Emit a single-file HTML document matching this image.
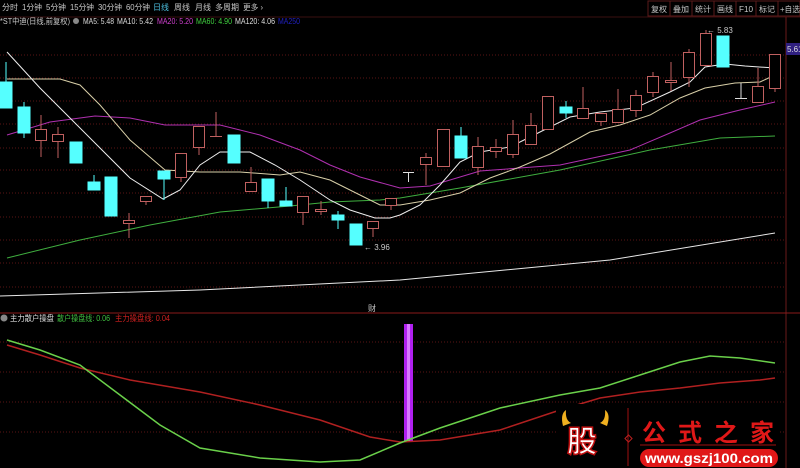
<!DOCTYPE html>
<html><head><meta charset="utf-8"><style>
body{margin:0;background:#000;width:800px;height:468px;overflow:hidden;font-family:"Liberation Sans","Noto Sans CJK SC",sans-serif;}
svg{display:block}
</style></head><body>
<svg width="800" height="468" viewBox="0 0 800 468" xmlns="http://www.w3.org/2000/svg" font-family="Liberation Sans, Noto Sans CJK SC, sans-serif">
<rect width="800" height="468" fill="#000"/>
<!-- toolbar -->
<g font-size="8" fill="#c8c8c8" lengthAdjust="spacingAndGlyphs">
<text x="2" y="10" textLength="16" lengthAdjust="spacingAndGlyphs">分时</text>
<text x="22" y="10" textLength="20" lengthAdjust="spacingAndGlyphs">1分钟</text>
<text x="46" y="10" textLength="20" lengthAdjust="spacingAndGlyphs">5分钟</text>
<text x="70" y="10" textLength="24" lengthAdjust="spacingAndGlyphs">15分钟</text>
<text x="98" y="10" textLength="24" lengthAdjust="spacingAndGlyphs">30分钟</text>
<text x="126" y="10" textLength="24" lengthAdjust="spacingAndGlyphs">60分钟</text>
<text x="153" y="10" fill="#4cc0e0" textLength="16" lengthAdjust="spacingAndGlyphs">日线</text>
<text x="174" y="10" textLength="16" lengthAdjust="spacingAndGlyphs">周线</text>
<text x="195" y="10" textLength="16" lengthAdjust="spacingAndGlyphs">月线</text>
<text x="215" y="10" textLength="24" lengthAdjust="spacingAndGlyphs">多周期</text>
<text x="243" y="10" textLength="20" lengthAdjust="spacingAndGlyphs">更多 ›</text>
</g>
<g font-size="8" fill="#c8c8c8">
<rect x="648" y="1" width="22" height="15" fill="none" stroke="#5a1a1a"/><text x="651" y="12" textLength="16" lengthAdjust="spacingAndGlyphs">复权</text>
<rect x="670" y="1" width="22" height="15" fill="none" stroke="#5a1a1a"/><text x="673" y="12" textLength="16" lengthAdjust="spacingAndGlyphs">叠加</text>
<rect x="692" y="1" width="22" height="15" fill="none" stroke="#5a1a1a"/><text x="695" y="12" textLength="16" lengthAdjust="spacingAndGlyphs">统计</text>
<rect x="714" y="1" width="22" height="15" fill="none" stroke="#5a1a1a"/><text x="717" y="12" textLength="16" lengthAdjust="spacingAndGlyphs">画线</text>
<rect x="736" y="1" width="20" height="15" fill="none" stroke="#5a1a1a"/><text x="739" y="12" textLength="14" lengthAdjust="spacingAndGlyphs">F10</text>
<rect x="756" y="1" width="22" height="15" fill="none" stroke="#5a1a1a"/><text x="759" y="12" textLength="16" lengthAdjust="spacingAndGlyphs">标记</text>
<rect x="778" y="1" width="22" height="15" fill="none" stroke="#5a1a1a"/><text x="780" y="12" textLength="20" lengthAdjust="spacingAndGlyphs">+自选</text>
</g>
<line x1="0" y1="17" x2="800" y2="17" stroke="#3a0f0f"/>
<g font-size="8">
<text x="0" y="24" fill="#c8c8c8" textLength="70" lengthAdjust="spacingAndGlyphs">*ST中迪(日线,前复权)</text><circle cx="76" cy="21" r="3" fill="#888"/>
<text x="83" y="24" fill="#ddd" textLength="31" lengthAdjust="spacingAndGlyphs">MA5: 5.48</text>
<text x="117" y="24" fill="#ddd" textLength="36" lengthAdjust="spacingAndGlyphs">MA10: 5.42</text>
<text x="157" y="24" fill="#d040d0" textLength="36" lengthAdjust="spacingAndGlyphs">MA20: 5.20</text>
<text x="196" y="24" fill="#40d040" textLength="36" lengthAdjust="spacingAndGlyphs">MA60: 4.90</text>
<text x="235" y="24" fill="#ddd" textLength="40" lengthAdjust="spacingAndGlyphs">MA120: 4.06</text>
<text x="278" y="24" fill="#2020c0" textLength="22" lengthAdjust="spacingAndGlyphs">MA250</text>
</g>
<!-- grid -->
<g stroke="#5a1515" stroke-dasharray="1,2" stroke-width="1">
<line x1="0" y1="55" x2="786" y2="55"/><line x1="0" y1="78" x2="786" y2="78"/><line x1="0" y1="101" x2="786" y2="101"/><line x1="0" y1="124" x2="786" y2="124"/><line x1="0" y1="148" x2="786" y2="148"/><line x1="0" y1="170" x2="786" y2="170"/><line x1="0" y1="193" x2="786" y2="193"/><line x1="0" y1="217" x2="786" y2="217"/><line x1="0" y1="240" x2="786" y2="240"/><line x1="0" y1="263" x2="786" y2="263"/><line x1="0" y1="287" x2="786" y2="287"/>
<line x1="0" y1="342" x2="786" y2="342"/><line x1="0" y1="372" x2="786" y2="372"/><line x1="0" y1="402" x2="786" y2="402"/><line x1="0" y1="432" x2="786" y2="432"/>
</g>
<line x1="786" y1="17" x2="786" y2="468" stroke="#6a1a1a"/>
<rect x="786" y="43" width="14" height="12" fill="#302080"/><text x="787" y="52" font-size="8" fill="#ddd">5.61</text>
<!-- MA lines -->
<g fill="none" stroke-width="1">
<polyline stroke="#e8e8e8" points="0,296 200,290 400,280 610,260 775,233"/>
<polyline stroke="#3fae3f" points="7,258 80,240 150,225 220,212 290,206 330,202 380,200 400,198 460,188 560,170 650,150 720,138 775,136"/>
<polyline stroke="#b030b0" points="7,135 50,122 95,116 130,118 165,125 220,125 260,135 300,150 330,165 360,177 400,188 430,186 480,171 560,165 630,150 670,133 700,120 740,110 775,102"/>
<polyline stroke="#d8cfa8" points="7,79 60,79 80,85 100,105 130,140 165,170 200,172 240,172 280,175 300,172 330,180 360,195 380,205 400,205 430,200 460,193 490,178 520,167 550,154 590,132 620,125 650,115 680,98 705,88 735,83 760,82 775,75"/>
<polyline stroke="#eeeeee" points="7,52 40,88 70,118 100,148 130,178 163,199 180,190 200,165 220,152 250,152 275,165 300,180 330,200 350,210 375,218 390,218 400,215 420,205 440,185 460,162 480,152 510,147 540,132 570,117 600,112 635,108 670,92 690,82 705,67 725,64 745,66 775,68"/>
</g>
<!-- candles -->
<g stroke-width="1">
<g stroke="#5ff" fill="#5ff">
<line x1="6" y1="62" x2="6" y2="82"/><rect x="0" y="82" width="12" height="26"/>
<line x1="24" y1="102" x2="24" y2="138"/><rect x="18" y="107" width="12" height="26"/>
<rect x="70" y="142" width="12" height="21"/>
<line x1="94" y1="175" x2="94" y2="182"/><rect x="88" y="182" width="12" height="8"/>
<rect x="105" y="177" width="12" height="39"/>
<line x1="164" y1="171" x2="164" y2="200"/><rect x="158" y="171" width="12" height="8"/>
<rect x="228" y="135" width="12" height="28"/>
<line x1="268" y1="201" x2="268" y2="208"/><rect x="262" y="179" width="12" height="22"/>
<line x1="286" y1="187" x2="286" y2="201"/><rect x="280" y="201" width="12" height="5"/>
<line x1="338" y1="211" x2="338" y2="229"/><rect x="332" y="215" width="12" height="5"/>
<rect x="350" y="224" width="12" height="21"/>
<line x1="461" y1="127" x2="461" y2="136"/><rect x="455" y="136" width="12" height="22"/>
<line x1="566" y1="101" x2="566" y2="118"/><rect x="560" y="107" width="12" height="6"/>
<rect x="717" y="36" width="12" height="31"/>
</g>
<g stroke="#c06060" fill="#000">
<line x1="41" y1="115" x2="41" y2="157"/><rect x="35.5" y="129.5" width="11" height="11"/>
<line x1="58" y1="127" x2="58" y2="158"/><rect x="52.5" y="134.5" width="11" height="7"/>
<line x1="129" y1="213" x2="129" y2="238"/><rect x="123.5" y="220.5" width="11" height="3"/>
<line x1="146" y1="196" x2="146" y2="205"/><rect x="140.5" y="196.5" width="11" height="5"/>
<line x1="181" y1="153" x2="181" y2="182"/><rect x="175.5" y="153.5" width="11" height="24"/>
<line x1="199" y1="126" x2="199" y2="155"/><rect x="193.5" y="126.5" width="11" height="21"/>
<line x1="216" y1="112" x2="216" y2="137"/><line x1="210" y1="136.5" x2="222" y2="136.5"/>
<line x1="251" y1="167" x2="251" y2="191"/><rect x="245.5" y="182.5" width="11" height="9"/>
<line x1="303" y1="196" x2="303" y2="225"/><rect x="297.5" y="196.5" width="11" height="16"/>
<line x1="321" y1="201" x2="321" y2="215"/><rect x="315.5" y="209.5" width="11" height="2"/>
<line x1="373" y1="221" x2="373" y2="237"/><rect x="367.5" y="221.5" width="11" height="7"/>
<line x1="391" y1="198" x2="391" y2="210"/><rect x="385.5" y="198.5" width="11" height="7"/>
<line x1="426" y1="153" x2="426" y2="185"/><rect x="420.5" y="157.5" width="11" height="7"/>
<rect x="437.5" y="129.5" width="12" height="37"/>
<line x1="478" y1="137" x2="478" y2="175"/><rect x="472.5" y="146.5" width="11" height="21"/>
<line x1="496" y1="139" x2="496" y2="158"/><rect x="490.5" y="147.5" width="11" height="4"/>
<line x1="513" y1="120" x2="513" y2="158"/><rect x="507.5" y="134.5" width="11" height="20"/>
<line x1="531" y1="113" x2="531" y2="144"/><rect x="525.5" y="125.5" width="11" height="19"/>
<rect x="542.5" y="96.5" width="11" height="33"/>
<line x1="583" y1="87" x2="583" y2="118"/><rect x="577.5" y="108.5" width="11" height="10"/>
<line x1="601" y1="113" x2="601" y2="126"/><rect x="595.5" y="113.5" width="11" height="8"/>
<line x1="618" y1="89" x2="618" y2="122"/><rect x="612.5" y="109.5" width="11" height="13"/>
<line x1="636" y1="90" x2="636" y2="117"/><rect x="630.5" y="95.5" width="11" height="15"/>
<line x1="653" y1="72" x2="653" y2="97"/><rect x="647.5" y="76.5" width="11" height="16"/>
<line x1="671" y1="62" x2="671" y2="91"/><rect x="665.5" y="80.5" width="11" height="2"/>
<line x1="689" y1="49" x2="689" y2="87"/><rect x="683.5" y="52.5" width="11" height="25"/>
<line x1="706" y1="30" x2="706" y2="33"/><rect x="700.5" y="33.5" width="11" height="32"/>
<line x1="758" y1="68" x2="758" y2="102"/><rect x="752.5" y="86.5" width="11" height="16"/>
<line x1="775" y1="54" x2="775" y2="92"/><rect x="769.5" y="54.5" width="11" height="34"/>
</g>
<g stroke="#ddd"><line x1="403" y1="172.5" x2="414" y2="172.5"/><line x1="408.5" y1="172" x2="408.5" y2="182"/>
<line x1="735" y1="98.5" x2="747" y2="98.5"/><line x1="741" y1="83" x2="741" y2="98"/></g>
</g>
<text x="364" y="250" font-size="8" fill="#ccc">← 3.96</text>
<text x="707" y="33" font-size="8" fill="#ccc">← 5.83</text>
<text x="368" y="311" font-size="8" fill="#ccc">财</text>
<line x1="0" y1="313" x2="800" y2="313" stroke="#8a1a1a"/>
<!-- indicator header -->
<circle cx="4" cy="318" r="3.5" fill="#888"/>
<g font-size="8"><text x="10" y="321" fill="#ddd" textLength="44" lengthAdjust="spacingAndGlyphs">主力散户操盘</text>
<text x="57" y="321" fill="#40c040" textLength="53" lengthAdjust="spacingAndGlyphs">散户操盘线: 0.06</text>
<text x="115" y="321" fill="#d02020" textLength="55" lengthAdjust="spacingAndGlyphs">主力操盘线: 0.04</text></g>
<rect x="404" y="324" width="9" height="118" fill="#b020f0"/>
<rect x="407" y="324" width="3" height="118" fill="#d878ff"/>
<g fill="none" stroke-width="1.5">
<polyline stroke="#b02020" points="7,345 40,355 80,368 130,380 200,392 260,405 320,420 370,437 400,442 440,440 500,430 560,410 600,398 640,392 680,388 720,383 760,380 775,378"/>
<polyline stroke="#6ad04a" points="7,340 40,350 80,365 120,395 160,425 200,448 260,458 320,462 360,460 400,443 440,428 500,408 560,395 600,388 640,375 680,362 710,356 740,358 775,363"/>
</g>
<!-- logo -->
<rect x="556" y="404" width="222" height="64" fill="#000"/>
<path d="M563,426 Q560,414 566,410 Q565,420 571,423 Z" fill="#f0b020"/>
<path d="M607,426 Q611,414 605,410 Q606,420 600,423 Z" fill="#f0b020"/>
<text x="567" y="452" font-size="30" font-weight="bold" fill="#fff" stroke="#c01010" stroke-width="1.5">股</text>
<line x1="628" y1="408" x2="628" y2="466" stroke="#a01010"/>
<rect x="626" y="436" width="5" height="5" fill="none" stroke="#c02020" transform="rotate(45 628.5 438.5)"/>
<text x="642" y="441" font-size="24" font-weight="bold" fill="#e01818" textLength="132" lengthAdjust="spacing">公式之家</text>
<line x1="640" y1="445" x2="776" y2="445" stroke="#a01010"/>
<rect x="640" y="449" width="138" height="18" rx="9" fill="#e01818"/>
<text x="645" y="463" font-size="14" font-weight="bold" fill="#fff" textLength="128" lengthAdjust="spacingAndGlyphs">www.gszj100.com</text>
</svg>
</body></html>
